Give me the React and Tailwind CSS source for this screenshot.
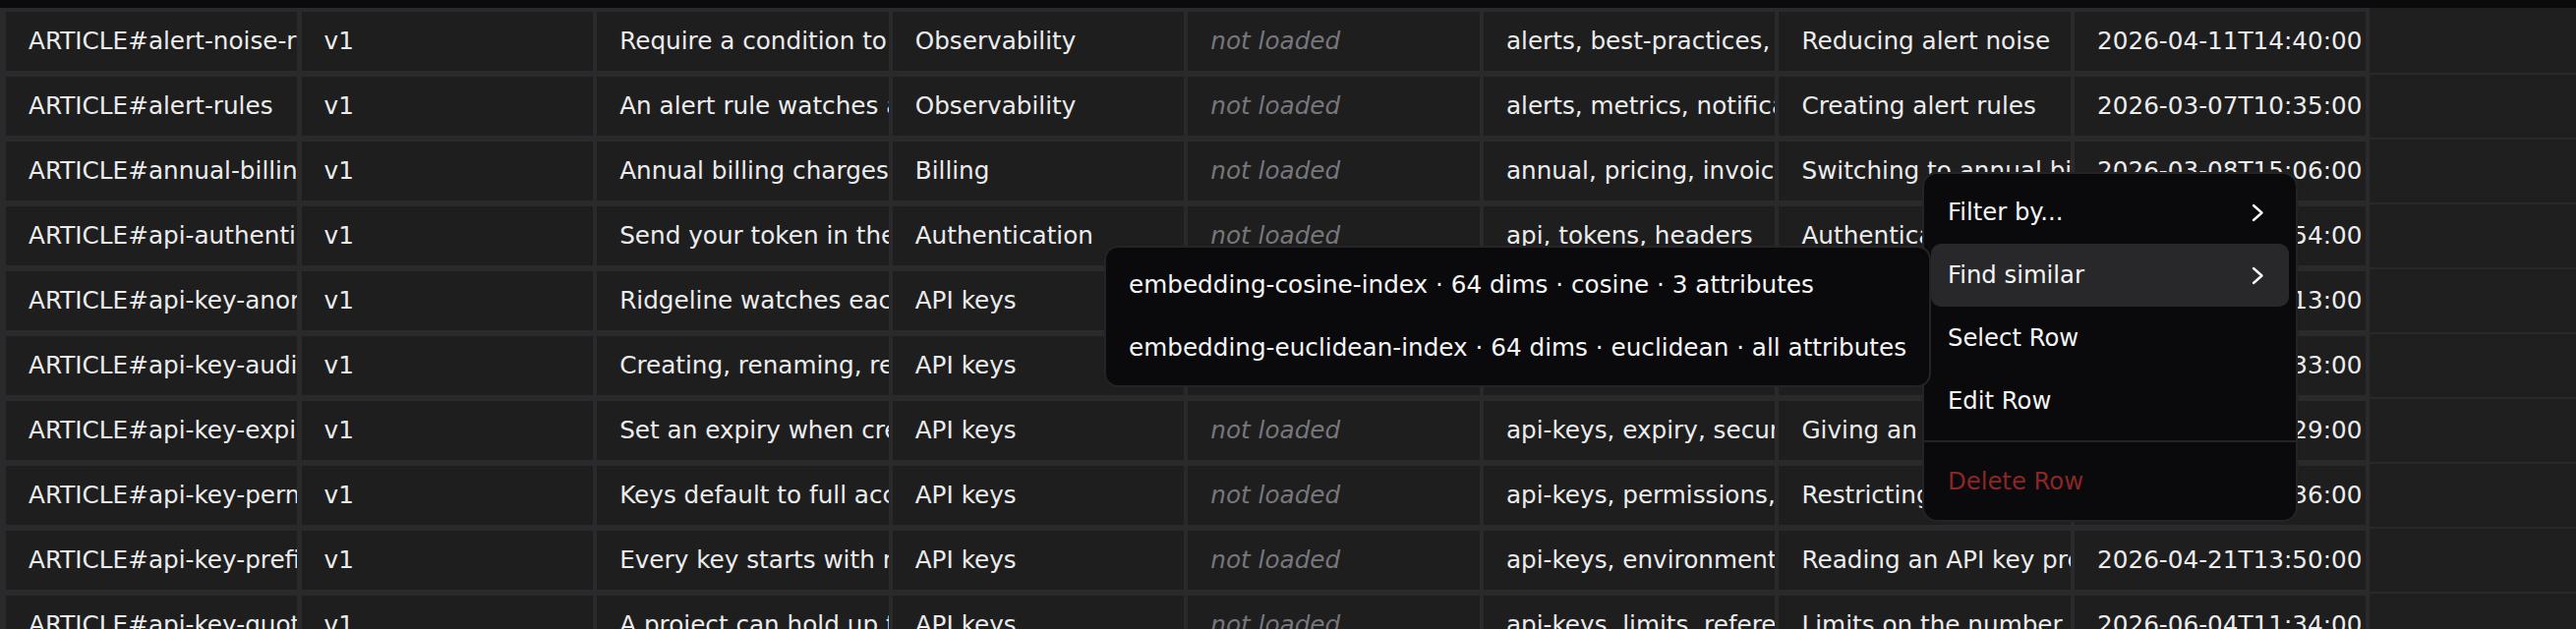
import React from "react";

const rows = [
  ["ARTICLE#alert-noise-reduction", "v1", "Require a condition to hold for several minutes before firing.", "Observability", null, "alerts, best-practices, noise", "Reducing alert noise", "2026-04-11T14:40:00"],
  ["ARTICLE#alert-rules", "v1", "An alert rule watches a metric and notifies you.", "Observability", null, "alerts, metrics, notifications", "Creating alert rules", "2026-03-07T10:35:00"],
  ["ARTICLE#annual-billing", "v1", "Annual billing charges you once a year.", "Billing", null, "annual, pricing, invoices", "Switching to annual billing", "2026-03-08T15:06:00"],
  ["ARTICLE#api-authentication", "v1", "Send your token in the Authorization header.", "Authentication", null, "api, tokens, headers", "Authenticating API requests", "2026-02-19T09:54:00"],
  ["ARTICLE#api-key-anomalies", "v1", "Ridgeline watches each key for unusual traffic.", "API keys", null, "api-keys, security, anomalies", "Detecting key anomalies", "2026-05-02T16:13:00"],
  ["ARTICLE#api-key-audit", "v1", "Creating, renaming, revoking and rotating keys is logged.", "API keys", null, "api-keys, audit, logs", "Auditing API key activity", "2026-04-28T12:33:00"],
  ["ARTICLE#api-key-expiry", "v1", "Set an expiry when creating a key.", "API keys", null, "api-keys, expiry, security", "Giving an API key an expiry", "2026-03-15T08:29:00"],
  ["ARTICLE#api-key-permissions", "v1", "Keys default to full access to the project.", "API keys", null, "api-keys, permissions, scopes", "Restricting API key permissions", "2026-03-22T17:36:00"],
  ["ARTICLE#api-key-prefix", "v1", "Every key starts with rl_live_ or rl_test_.", "API keys", null, "api-keys, environments, prefixes", "Reading an API key prefix", "2026-04-21T13:50:00"],
  ["ARTICLE#api-key-quota", "v1", "A project can hold up to 50 active keys.", "API keys", null, "api-keys, limits, reference", "Limits on the number of API keys", "2026-06-04T11:34:00"],
];

const Chevron = () => (
  <svg width="13" height="19" viewBox="0 0 13 19" fill="none">
    <polyline
      points="2,2 10.5,9.5 2,17"
      stroke="#f5f5f5"
      strokeWidth="2.4"
      strokeLinecap="round"
      strokeLinejoin="round"
    />
  </svg>
);

const MenuItem = ({ label, sub, active, danger }) => (
  <div
    className={`h-[64px] flex items-center justify-between pl-[17px] pr-[25px] rounded-[10px] ${
      active ? "bg-[#28282b]" : ""
    } ${danger ? "text-[#8c2626]" : "text-[#f5f5f5]"}`}
  >
    <span>{label}</span>
    {sub && <Chevron />}
  </div>
);

export default function App() {
  return (
    <div className="relative w-[2620px] h-[640px] overflow-hidden bg-[#2a2a2d] font-['DejaVu_Sans',sans-serif]">
      <div className="h-[8px] bg-[#0b0b0d]" />
      <div className="flex h-[632px]">
        <div className="pl-[6px] pt-[4px] grid grid-cols-[repeat(8,296.4px)] gap-x-[4.2px] gap-y-[6px] auto-rows-[60px]">
          {rows.map((row, r) =>
            row.map((cell, c) => (
              <div
                key={`${r}-${c}`}
                className="bg-[#1e1e1f] pl-[23px] flex items-center overflow-hidden whitespace-nowrap text-[24.7px]"
              >
                {cell === null ? (
                  <span className="italic text-[#77777b]">not loaded</span>
                ) : (
                  <span className="text-[#ececec]">{cell}</span>
                )}
              </div>
            ))
          )}
        </div>
        <div className="ml-[3.4px] flex-1 bg-[#1f1f20] pt-[2px]">
          {rows.map((_, i) => (
            <div key={i} className="h-[66px] border-b-2 border-[#29292b]" />
          ))}
        </div>
      </div>

      {/* context menu */}
      <div className="absolute left-[1955px] top-[175px] w-[382px] rounded-[15px] border-2 border-[#242427] bg-[#0a0a0c] p-[7px] text-[24.3px]">
        <MenuItem label="Filter by..." sub />
        <MenuItem label="Find similar" sub active />
        <MenuItem label="Select Row" />
        <MenuItem label="Edit Row" />
        <div className="h-[2px] bg-[#242427] -mx-[7px] my-[8px]" />
        <MenuItem label="Delete Row" danger />
      </div>

      {/* find similar submenu */}
      <div className="absolute left-[1123px] top-[250px] rounded-[14px] border-2 border-[#242427] bg-[#0a0a0c] p-[6px] text-[24.7px] text-[#f5f5f5] whitespace-nowrap">
        <div className="h-[64px] flex items-center px-[17px] rounded-[10px]">
          embedding-cosine-index · 64 dims · cosine · 3 attributes
        </div>
        <div className="h-[64px] flex items-center px-[17px] rounded-[10px]">
          embedding-euclidean-index · 64 dims · euclidean · all attributes
        </div>
      </div>
    </div>
  );
}
